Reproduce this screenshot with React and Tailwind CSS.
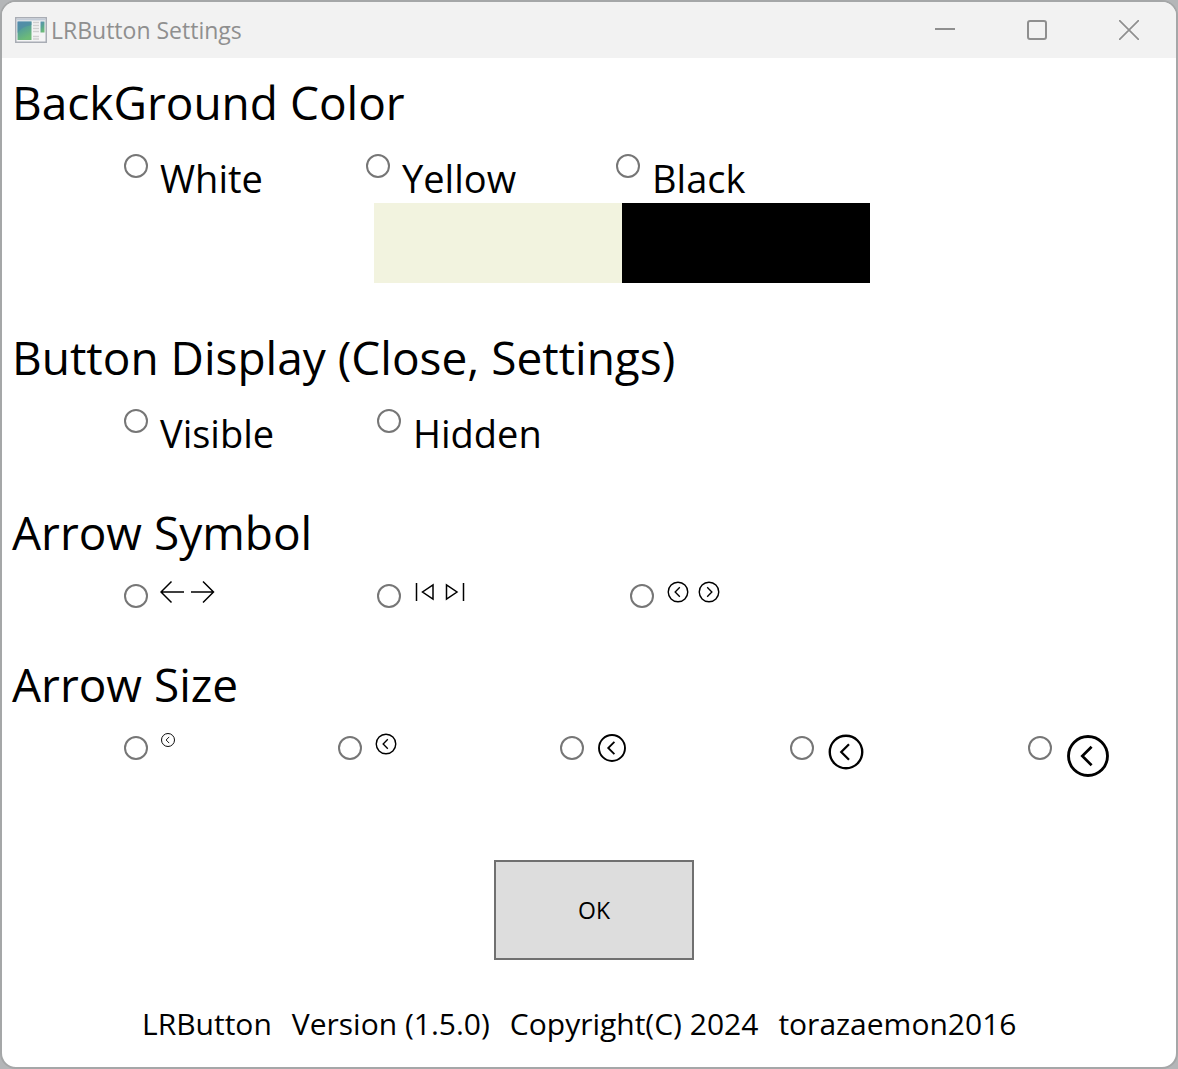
import React, { useState } from 'react';

const backgrounds = [
  { value: 'white', label: 'White', width: 'w-[242px]' },
  { value: 'yellow', label: 'Yellow', width: 'w-[250px]' },
  { value: 'black', label: 'Black', width: 'w-[250px]' },
];

const displays = [
  { value: 'visible', label: 'Visible', width: 'w-[253px]' },
  { value: 'hidden', label: 'Hidden', width: 'w-[253px]' },
];

const sizes = [
  { value: '16', className: 'size-4' },
  { value: '24', className: 'size-6' },
  { value: '32', className: 'size-8' },
  { value: '40', className: 'size-10' },
  { value: '48', className: 'size-12' },
];

function AppIcon() {
  return (
    <svg viewBox="0 0 32 26" className="w-8 h-[26px]" aria-hidden="true">
      <defs>
        <linearGradient id="pane" x1="0" y1="0" x2="0.4" y2="1">
          <stop offset="0" stopColor="#5b8fb5" />
          <stop offset="0.5" stopColor="#57a295" />
          <stop offset="1" stopColor="#6dbb78" />
        </linearGradient>
      </defs>
      <rect x="0.75" y="0.75" width="30.5" height="24.5" fill="#f4f4f5" stroke="#a9adb5" strokeWidth="1.5" />
      <path d="M1.5 2.5H30.5" stroke="#c3ccd8" strokeWidth="2" />
      <rect x="2.5" y="4.5" width="14" height="18.5" fill="url(#pane)" />
      <path d="M2.5 16C6 11 11 9 16.5 8V4.5H2.5Z" fill="#4c87a8" opacity="0.6" />
      <path d="M18 5.5H24M18 8.5H24M18 11.5H24M18 14.5H24M18 19.5H24M18 22H24" stroke="#cfcfcf" strokeWidth="1.3" />
      <rect x="25.5" y="4.5" width="4" height="11" fill="url(#pane)" />
    </svg>
  );
}

function CircleArrow({ className, right }) {
  return (
    <svg viewBox="0 0 16 16" className={className} fill="none" stroke="black" aria-hidden="true">
      <circle cx="8" cy="8" r="6.5" strokeWidth="0.95" />
      <path d={right ? 'M6.8 4.9L9.9 8L6.8 11.1' : 'M9.2 4.9L6.1 8L9.2 11.1'} strokeWidth="0.9" />
    </svg>
  );
}

function LineArrows() {
  return (
    <svg viewBox="0 0 56 24" className="w-14 h-6" fill="none" stroke="black" strokeWidth="1.5" aria-hidden="true">
      <path d="M24 12H1M11.5 1.5L1 12L11.5 22.5" />
      <path d="M31 12H54M43 1.5L53.5 12L43 22.5" />
    </svg>
  );
}

function SkipArrows() {
  return (
    <svg viewBox="0 0 56 24" className="w-14 h-6" fill="none" stroke="black" strokeWidth="1.5" aria-hidden="true">
      <path d="M3.5 3V21M20 4.8V19.2L9.5 12Z" />
      <path d="M50.5 3V21M33.5 4.8V19.2L44 12Z" />
    </svg>
  );
}

function CircleArrows() {
  return (
    <span className="flex gap-[7px]">
      <CircleArrow className="size-6" />
      <CircleArrow className="size-6" right />
    </span>
  );
}

const symbols = [
  { value: 'line', name: 'Line arrows', icon: LineArrows },
  { value: 'skip', name: 'Skip arrows', icon: SkipArrows },
  { value: 'circle', name: 'Circled arrows', icon: CircleArrows },
];

function Option({ group, value, selected, onSelect, name, className = '', children }) {
  return (
    <label className={`flex items-start gap-3 ${className}`}>
      <input
        type="radio"
        name={group}
        value={value}
        aria-label={name}
        checked={selected === value}
        onChange={() => onSelect(value)}
        className="appearance-none mt-1 size-6 shrink-0 rounded-full border-2 border-[#767676] bg-white checked:bg-black checked:shadow-[inset_0_0_0_4px_white]"
      />
      {children}
    </label>
  );
}

function Section({ title, children }) {
  return (
    <section>
      <h2 className="pl-[10px] mb-4 text-[46px] leading-[64px]">{title}</h2>
      <div className="pl-[122px]">{children}</div>
    </section>
  );
}

export default function App() {
  const [background, setBackground] = useState(null);
  const [display, setDisplay] = useState(null);
  const [symbol, setSymbol] = useState(null);
  const [size, setSize] = useState(null);

  return (
    <div className="min-h-screen bg-[#b4b6b8] font-['Open_Sans',sans-serif] text-black">
      <div className="flex min-h-screen flex-col overflow-hidden rounded-2xl border-2 border-[#a5a7a8] bg-white">
        <header className="flex h-14 items-center bg-[#f2f2f2] pl-[13px] pr-px text-[#8f8f8f]">
          <AppIcon />
          <h1 className="ml-1 flex-1 text-[23px] leading-8">LRButton Settings</h1>
          <button type="button" aria-label="Minimize" className="flex h-full w-[92px] items-center justify-center">
            <svg viewBox="0 0 20 20" className="size-5" stroke="currentColor" strokeWidth="2"><path d="M0 9H20" /></svg>
          </button>
          <button type="button" aria-label="Maximize" className="flex h-full w-[92px] items-center justify-center">
            <svg viewBox="0 0 20 20" className="size-5" fill="none" stroke="currentColor" strokeWidth="2"><rect x="1" y="1" width="18" height="18" rx="2" /></svg>
          </button>
          <button type="button" aria-label="Close" className="flex h-full w-[92px] items-center justify-center">
            <svg viewBox="0 0 20 20" className="size-5" stroke="currentColor" strokeWidth="1.7"><path d="M0 0L20 20M20 0L0 20" /></svg>
          </button>
        </header>

        <main className="flex flex-col gap-[42px] pt-3 pb-5">
          <Section title="BackGround Color">
            <div className="flex">
              {backgrounds.map((b) => (
                <Option key={b.value} group="background" value={b.value} selected={background} onSelect={setBackground} className={b.width}>
                  <span className="pt-1 text-[38px] leading-[49px]">{b.label}</span>
                </Option>
              ))}
            </div>
            <div className="flex h-20">
              <div className="w-[250px] bg-white" />
              <div className="w-[248px] bg-[#f2f3df]" />
              <div className="w-[248px] bg-black" />
            </div>
          </Section>

          <Section title="Button Display (Close, Settings)">
            <div className="flex">
              {displays.map((d) => (
                <Option key={d.value} group="display" value={d.value} selected={display} onSelect={setDisplay} className={d.width}>
                  <span className="pt-1 text-[38px] leading-[49px]">{d.label}</span>
                </Option>
              ))}
            </div>
          </Section>

          <Section title="Arrow Symbol">
            <div className="flex min-h-[30px]">
              {symbols.map((s) => (
                <Option key={s.value} group="symbol" value={s.value} name={s.name} selected={symbol} onSelect={setSymbol} className="w-[253px]">
                  <s.icon />
                </Option>
              ))}
            </div>
          </Section>

          <Section title="Arrow Size">
            <div className="flex items-start gap-[162px]">
              {sizes.map((s) => (
                <Option key={s.value} group="size" value={s.value} name={`Size ${s.value}`} selected={size} onSelect={setSize}>
                  <CircleArrow className={s.className} />
                </Option>
              ))}
            </div>
          </Section>

          <button type="button" className="mt-[38px] ml-[10px] h-[100px] w-[200px] self-center border-2 border-[#707070] bg-[#dddddd] text-[23px]">
            OK
          </button>

          <footer className="flex gap-5 pl-[140px] text-[30px] leading-[43px]">
            <span>LRButton</span>
            <span>Version (1.5.0)</span>
            <span>Copyright(C) 2024</span>
            <span>torazaemon2016</span>
          </footer>
        </main>
      </div>
    </div>
  );
}
